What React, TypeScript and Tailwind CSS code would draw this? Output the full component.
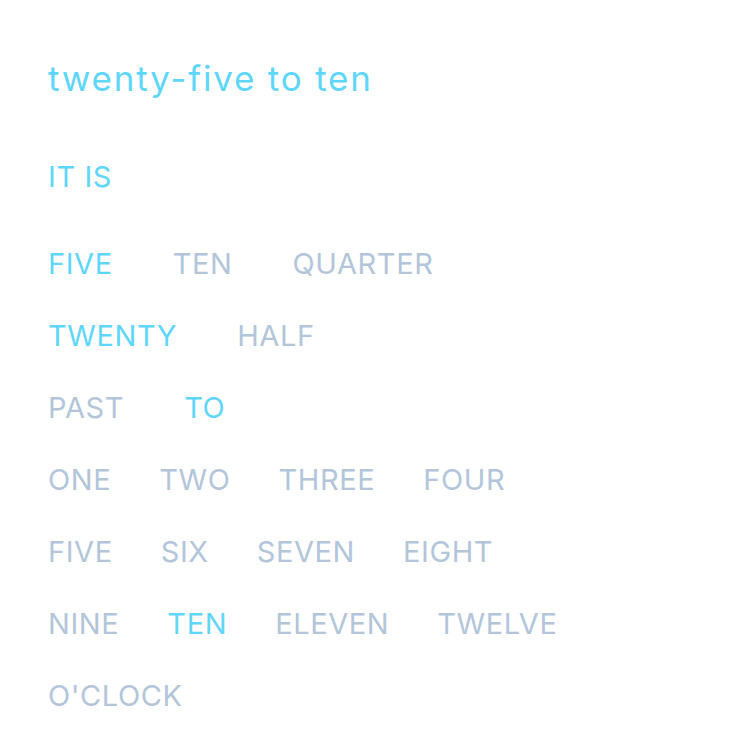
import React from 'react';

type Word = { text: string; on?: boolean };

const minuteRows: Word[][] = [
    [{ text: 'FIVE', on: true }, { text: 'TEN' }, { text: 'QUARTER' }],
    [{ text: 'TWENTY', on: true }, { text: 'HALF' }],
    [{ text: 'PAST' }, { text: 'TO', on: true }],
];

const hourRows: Word[][] = [
    [{ text: 'ONE' }, { text: 'TWO' }, { text: 'THREE' }, { text: 'FOUR' }],
    [{ text: 'FIVE' }, { text: 'SIX' }, { text: 'SEVEN' }, { text: 'EIGHT' }],
    [{ text: 'NINE' }, { text: 'TEN', on: true }, { text: 'ELEVEN' }, { text: 'TWELVE' }],
    [{ text: "O'CLOCK" }],
];

function Row({ words, gap }: { words: Word[]; gap: string }) {
    return (
        <div className={`flex h-[72px] items-center ${gap}`}>
            {words.map((w, i) => (
                <span key={i} className={w.on ? 'text-[#5fd6fb]' : 'text-[#b2c5da]'}>
                    {w.text}
                </span>
            ))}
        </div>
    );
}

export default function App() {
    return (
        <div className="min-h-screen bg-white px-12 pt-[52px] font-['Inter',sans-serif]">
            <h1 className="text-[35px] leading-[52px] tracking-[1.8px] text-[#5fd6fb]">twenty-five to ten</h1>

            <div className="mt-[47px] text-[29px] tracking-[0.6px]">
                <div className="flex h-[52px] items-center text-[#5fd6fb]">IT IS</div>
                <div className="mt-[25px]">
                    {minuteRows.map((r, i) => (
                        <Row key={i} words={r} gap="gap-[60px]" />
                    ))}
                    {hourRows.map((r, i) => (
                        <Row key={i} words={r} gap="gap-[48px]" />
                    ))}
                </div>
            </div>
        </div>
    );
}
